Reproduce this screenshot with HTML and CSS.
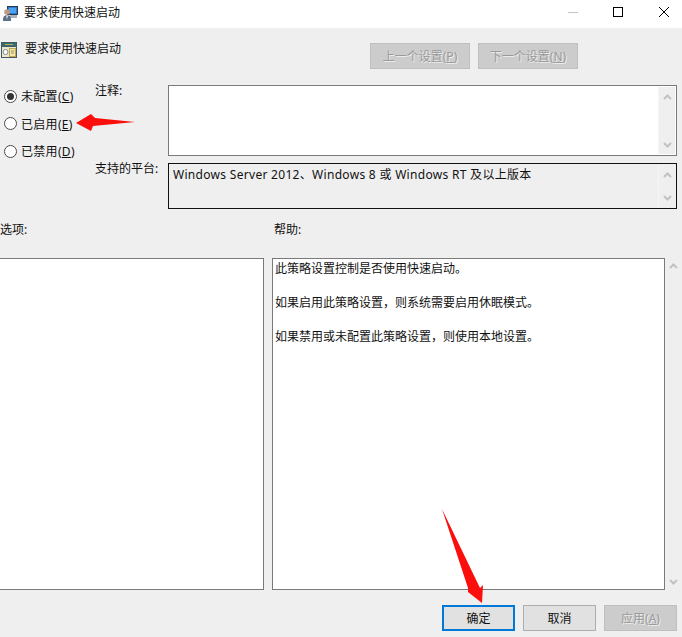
FILE: index.html
```html
<!DOCTYPE html>
<html lang="zh-CN">
<head>
  <meta charset="UTF-8" />
  <meta name="viewport" content="width=device-width, initial-scale=1.0" />
  <title>要求使用快速启动</title>
  <link rel="stylesheet" href="styles.css">
</head>
<body>
  <div class="titlebar">
    <svg class="app-icon" width="16" height="16" viewBox="0 0 16 16">
      <rect x="5.500" y="0.500" width="10" height="8" fill="#2b78d8" stroke="#2c3a4c"/>
      <rect x="7" y="2" width="7" height="5" fill="#4aa3ee"/>
      <rect x="8" y="9" width="7" height="3" fill="#a9b2bb"/>
      <circle cx="5" cy="6" r="2.800" fill="#c49a7c"/>
      <path d="M1 15 Q0.500 9 5 9 Q9.500 9 9 15 Z" fill="#5c7087"/>
      <path d="M4 9.500h2l-1 4z" fill="#e8e8e8"/>
    </svg>
    <span class="title">要求使用快速启动</span>
    <div class="win-btns">
      <svg width="46" height="24" viewBox="0 0 46 24"><path d="M19 12.500h10" stroke="#c4c4c4"/></svg>
      <svg width="46" height="24" viewBox="0 0 46 24"><rect x="18.500" y="7.500" width="9" height="9" fill="none" stroke="#000"/></svg>
      <svg width="46" height="24" viewBox="0 0 46 24"><path d="M18 7l10 10M28 7l-10 10" stroke="#000"/></svg>
    </div>
  </div>

  <div class="dialog">
    <div class="head">
      <svg class="policy-icon" width="16" height="16" viewBox="0 0 16 16">
        <rect x="0.500" y="0.500" width="15" height="15" fill="#e9e6d2" stroke="#46595f"/>
        <rect x="1" y="1" width="14" height="3" fill="#2f6f78"/>
        <rect x="1" y="4" width="14" height="1" fill="#46595f"/>
        <rect x="4" y="2" width="8" height="1" fill="#c9a94f"/>
        <circle cx="4.500" cy="10" r="2.500" fill="#fff" stroke="#7d8a8e"/>
        <rect x="8.500" y="6.500" width="6" height="8" fill="#f3e8a8" stroke="#b9a552"/>
        <path d="M10 9h3M10 11h3" stroke="#9a8f5a"/>
      </svg>
      <span class="policy-name">要求使用快速启动</span>
      <div class="nav-btns">
        <button class="btn off">上一个设置(<u>P</u>)</button>
        <button class="btn off">下一个设置(<u>N</u>)</button>
      </div>
    </div>

    <div class="config">
      <div class="radios">
        <div class="radio checked"><i></i>未配置(<u>C</u>)</div>
        <div class="radio"><i></i>已启用(<u>E</u>)</div>
        <div class="radio"><i></i>已禁用(<u>D</u>)</div>
      </div>
      <div class="fields">
        <label>注释:</label>
        <div class="box comment">
          <div class="text"></div>
          <div class="scroll">
            <svg width="9" height="6" viewBox="0 0 9 6"><path d="M1 5l3.500-3.500L8 5" fill="none" stroke="#c2c2c2" stroke-width="2"/></svg>
            <svg width="9" height="6" viewBox="0 0 9 6"><path d="M1 1l3.500 3.500L8 1" fill="none" stroke="#c2c2c2" stroke-width="2"/></svg>
          </div>
        </div>
        <label>支持的平台:</label>
        <div class="box platform">
          <div class="text">Windows Server 2012、Windows 8 或 Windows RT 及以上版本</div>
          <div class="scroll">
            <svg width="9" height="6" viewBox="0 0 9 6"><path d="M1 5l3.500-3.500L8 5" fill="none" stroke="#c2c2c2" stroke-width="2"/></svg>
            <svg width="9" height="6" viewBox="0 0 9 6"><path d="M1 1l3.500 3.500L8 1" fill="none" stroke="#c2c2c2" stroke-width="2"/></svg>
          </div>
        </div>
      </div>
    </div>

    <div class="panes">
      <div class="pane-label">选项:</div>
      <div class="pane-label help-label">帮助:</div>
      <div class="pane options"></div>
      <div class="help-wrap">
        <div class="pane help">
          <p>此策略设置控制是否使用快速启动。</p>
          <p>如果启用此策略设置，则系统需要启用休眠模式。</p>
          <p>如果禁用或未配置此策略设置，则使用本地设置。</p>
        </div>
        <div class="scroll outer">
          <svg width="9" height="6" viewBox="0 0 9 6"><path d="M1 5l3.500-3.500L8 5" fill="none" stroke="#c2c2c2" stroke-width="2"/></svg>
          <svg width="9" height="6" viewBox="0 0 9 6"><path d="M1 1l3.500 3.500L8 1" fill="none" stroke="#c2c2c2" stroke-width="2"/></svg>
        </div>
      </div>
    </div>

    <div class="footer">
      <button class="btn primary">确定</button>
      <button class="btn">取消</button>
      <button class="btn off">应用(<u>A</u>)</button>
    </div>
  </div>

  <!-- red annotation arrows drawn on top of the screenshot -->
  <svg class="arrows" width="682" height="637" viewBox="0 0 682 637">
    <polygon points="76,123 91,114 95,118 135,122 93,126 91,131" fill="#fb0f0c"/>
    <polygon points="442,509 480,588 483,585 482,603 468,592 468,588" fill="#fb0f0c"/>
  </svg>
</body>
</html>
```
FILE: styles.css
```css
* {
  box-sizing: border-box;
}

html, body {
  margin: 0;
  height: 100%;
}

body {
  width: 682px;
  height: 637px;
  overflow: hidden;
  position: relative;
  background: #efefef;
  color: #111;
  font-family: "Noto Sans", "Noto Sans CJK SC", sans-serif;
  font-size: 12px;
  line-height: 16px;
}

.titlebar {
  height: 28px;
  background: #fff;
  display: flex;
  align-items: center;
  padding-left: 2px;
}

.app-icon {
  flex: none;
  margin-top: -1px;
}

.title {
  margin-left: 6px;
  margin-top: -2px;
}

.win-btns {
  margin-left: auto;
  margin-right: -5px;
  display: flex;
  margin-top: -4px;
}

.dialog {
  display: flex;
  flex-direction: column;
}

.head {
  height: 26px;
  margin-top: 15px;
  display: flex;
  padding-left: 1px;
}

.policy-icon {
  margin-top: -1px;
}

.policy-name {
  margin-left: 8px;
  margin-top: -2px;
}

.nav-btns {
  margin-left: auto;
  margin-right: 104px;
  display: flex;
  gap: 8px;
}

.btn {
  width: 100px;
  height: 26px;
  padding: 2px 0 0;
  border: 1px solid #adadad;
  background: #e1e1e1;
  color: #111;
  font: inherit;
}

.btn u {
  text-underline-offset: 1px;
}

.btn.off {
  background: #cccccc;
  border-color: #bfbfbf;
  color: #9a9a9a;
  text-shadow: 1px 1px 0 #ececec;
}

.btn.primary {
  border: 2px solid #0078d7;
}

.config {
  display: flex;
  margin-top: 16px;
  padding-right: 5px;
}

.radios {
  width: 95px;
  display: flex;
  flex-direction: column;
  gap: 5.5px;
  padding-left: 4px;
  letter-spacing: 0.3px;
}

.radio {
  height: 22px;
  padding-top: 2px;
  display: flex;
  align-items: center;
  white-space: pre;
}

.radio i {
  width: 13px;
  height: 13px;
  margin-top: -2px;
  margin-right: 4px;
  border: 1px solid #4a4a4a;
  border-radius: 50%;
  background: #fff;
  display: flex;
  align-items: center;
  justify-content: center;
}

.radio.checked i::after {
  content: "";
  width: 7px;
  height: 7px;
  border-radius: 50%;
  background: #333;
}

.fields {
  flex: 1;
  display: grid;
  grid-template-columns: 73px 1fr;
  grid-template-rows: 71px 46px;
  row-gap: 7px;
}

.fields label {
  margin-top: -2px;
}

.box {
  display: flex;
  border: 1px solid #7a7a7a;
  background: #fff;
  padding: 1px;
}

.box .text {
  flex: 1;
  padding: 2px 3px;
  white-space: nowrap;
  letter-spacing: 0.3px;
}

.box.platform {
  border-color: #111;
  background: #efefef;
}

.scroll {
  width: 17px;
  background: #efefef;
  border-left: 1px solid #f6f6f6;
  display: flex;
  flex-direction: column;
  justify-content: space-between;
  align-items: center;
  padding: 7px 0 6px;
}

.scroll.outer {
  border-left: 0;
  padding: 5px 0;
}

.panes {
  display: grid;
  grid-template-columns: 264px 1fr;
  grid-template-rows: 16px 332px;
  column-gap: 8px;
  row-gap: 21px;
  margin-top: 12px;
}

.pane-label {
  padding-top: 1px;
}

.help-label {
  padding-left: 2px;
}

.pane {
  border: 1px solid #7a7a7a;
  background: #fff;
}

.pane.options {
  border-left: 0;
}

.help-wrap {
  display: flex;
}

.pane.help {
  width: 393px;
  padding: 2px 2px;
}

.pane.help p {
  margin: 0 0 18px;
  line-height: 16px;
}

.footer {
  margin-top: 15px;
  padding-right: 5px;
  display: flex;
  justify-content: flex-end;
  gap: 8px;
}

.footer .btn {
  width: 73px;
}

.arrows {
  position: absolute;
  left: 0;
  top: 0;
  pointer-events: none;
}
```
